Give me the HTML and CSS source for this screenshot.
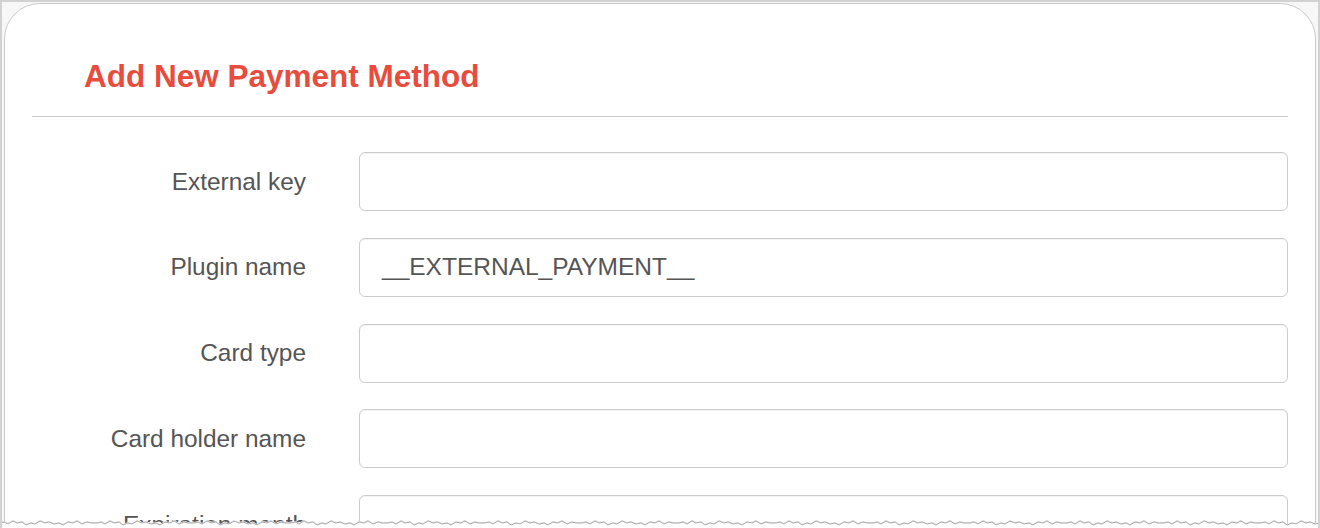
FILE: index.html
```html
<!DOCTYPE html>
<html>
<head>
<meta charset="utf-8">
<link rel="stylesheet" href="styles.css">
</head>
<body>
<div class="frame">
  <div class="card">
    <h3 class="title">Add New Payment Method</h3>
    <div class="rule"></div>
    <form class="form">
      <div class="row"><label class="label">External key</label><div class="input"></div></div>
      <div class="row"><label class="label">Plugin name</label><div class="input">__EXTERNAL_PAYMENT__</div></div>
      <div class="row"><label class="label">Card type</label><div class="input"></div></div>
      <div class="row"><label class="label">Card holder name</label><div class="input"></div></div>
      <div class="row"><label class="label">Expiration month</label><div class="input"></div></div>
    </form>
  </div>
  <svg class="torn" width="1320" height="16" viewBox="0 0 1320 16" xmlns="http://www.w3.org/2000/svg">
    <defs>
      <pattern id="tear" x="0" y="0" width="97" height="16" patternUnits="userSpaceOnUse">
        <path d="M0,8 L4,7 L8,9 L13,6 L17,8 L22,7 L26,10 L31,8 L35,9 L40,6 L45,8 L49,7 L54,9 L59,8 L63,10 L68,7 L73,8 L77,6 L82,9 L87,7 L91,8 L97,8" fill="none" stroke="#e6e6e6" stroke-width="2"/>
        <path d="M0,8 L4,7 L8,9 L13,6 L17,8 L22,7 L26,10 L31,8 L35,9 L40,6 L45,8 L49,7 L54,9 L59,8 L63,10 L68,7 L73,8 L77,6 L82,9 L87,7 L91,8 L97,8 L97,16 L0,16 Z" fill="#ffffff"/>
        <path d="M0,8 L4,7 L8,9 L13,6 L17,8 L22,7 L26,10 L31,8 L35,9 L40,6 L45,8 L49,7 L54,9 L59,8 L63,10 L68,7 L73,8 L77,6 L82,9 L87,7 L91,8 L97,8" fill="none" stroke="#a9a9a9" stroke-width="1"/>
      </pattern>
    </defs>
    <rect x="0" y="0" width="1320" height="16" fill="url(#tear)"/>
  </svg>
</div>
</body>
</html>
```

FILE: styles.css
```css
html, body {
  margin: 0;
  padding: 0;
  background: #ffffff;
}

.frame {
  position: relative;
  width: 1320px;
  height: 528px;
  box-sizing: border-box;
  border: 2px solid #d2d2d2;
  border-bottom: none;
  background: #f7f7f7;
  padding: 1px 2px 0 2px;
  overflow: hidden;
  font-family: "Liberation Sans", Arial, sans-serif;
}

.card {
  height: 560px;
  box-sizing: border-box;
  background: #ffffff;
  border: 1px solid #cacaca;
  border-radius: 36px 36px 0 0;
  padding: 54px 27px 0 27px;
}

.title {
  margin: 0 0 0 52px;
  font-size: 31.5px;
  line-height: 36px;
  font-weight: bold;
  color: #e74c3c;
}

.rule {
  height: 1px;
  background: #cccccc;
  margin-top: 22px;
}

.form {
  margin: 35px 0 0 0;
  display: flex;
  flex-direction: column;
  gap: 26.75px;
}

.row {
  display: grid;
  grid-template-columns: 274px 1fr;
  column-gap: 53px;
  align-items: center;
}

.label {
  text-align: right;
  font-size: 24.4px;
  color: #555555;
}

.input {
  height: 59px;
  box-sizing: border-box;
  border: 1px solid #cccccc;
  border-radius: 6px;
  padding: 0 22px;
  display: flex;
  align-items: center;
  font-size: 24.5px;
  color: #555555;
  box-shadow: inset 0 1px 1px rgba(0,0,0,0.05);
}

.torn {
  position: absolute;
  left: -2px;
  bottom: -3px;
  display: block;
}
```
